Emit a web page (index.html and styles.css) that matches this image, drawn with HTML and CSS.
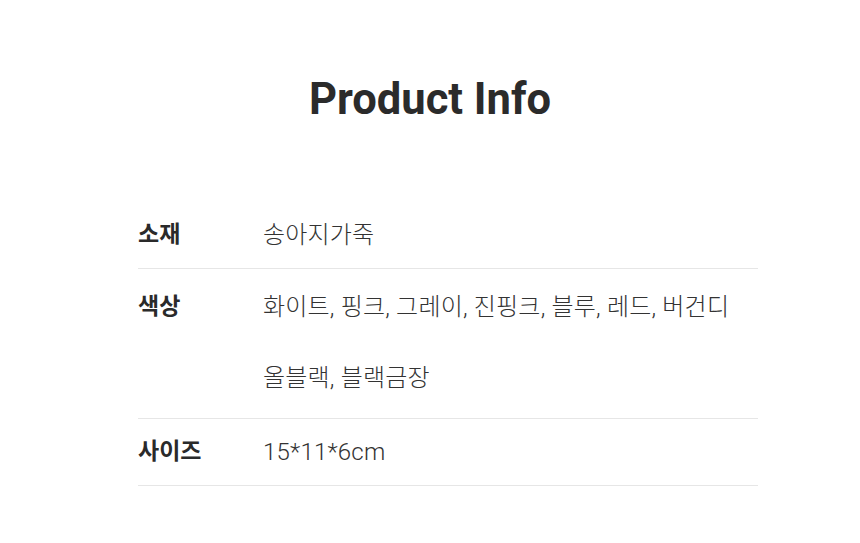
FILE: index.html
```html
<!DOCTYPE html>
<html lang="ko">
<head>
<meta charset="utf-8">
<link rel="stylesheet" href="styles.css">
</head>
<body>
<div class="page">
  <h1 class="title">Product Info</h1>
  <div class="info">
    <div class="row">
      <div class="label">소재</div>
      <div class="value"><div class="line">송아지가죽</div></div>
    </div>
    <div class="row multi">
      <div class="label">색상</div>
      <div class="value">
        <div class="line">화이트, 핑크, 그레이, 진핑크, 블루, 레드, 버건디</div>
        <div class="line">올블랙, 블랙금장</div>
      </div>
    </div>
    <div class="row">
      <div class="label">사이즈</div>
      <div class="value"><div class="line">15*11*6cm</div></div>
    </div>
  </div>
</div>
</body>
</html>
```
FILE: styles.css
```css
html, body {
  margin: 0;
  padding: 0;
  background: #ffffff;
}
.page {
  width: 860px;
  height: 543px;
  font-family: Roboto, "Noto Sans CJK KR", sans-serif;
  color: #333333;
}
.title {
  margin: 0;
  padding-top: 75px;
  height: 50px;
  line-height: 50px;
  font-size: 43.5px;
  font-weight: 700;
  text-align: center;
  color: #2b2b2b;
}
.info {
  margin-top: 77px;
  margin-left: 138px;
  width: 620px;
}
.row {
  display: grid;
  grid-template-columns: 125px 1fr;
  padding: 21px 0;
  border-bottom: 1px solid #e6e6e6;
}
.row.multi {
  padding: 26px 0 28px;
}
.label {
  font-size: 23px;
  line-height: 24px;
  font-weight: 700;
  color: #2a2a2a;
}
.value {
  font-size: 24px;
  line-height: 24px;
  font-weight: 300;
  letter-spacing: 0.2px;
  color: #333333;
}
.line + .line {
  margin-top: 47px;
}
```
